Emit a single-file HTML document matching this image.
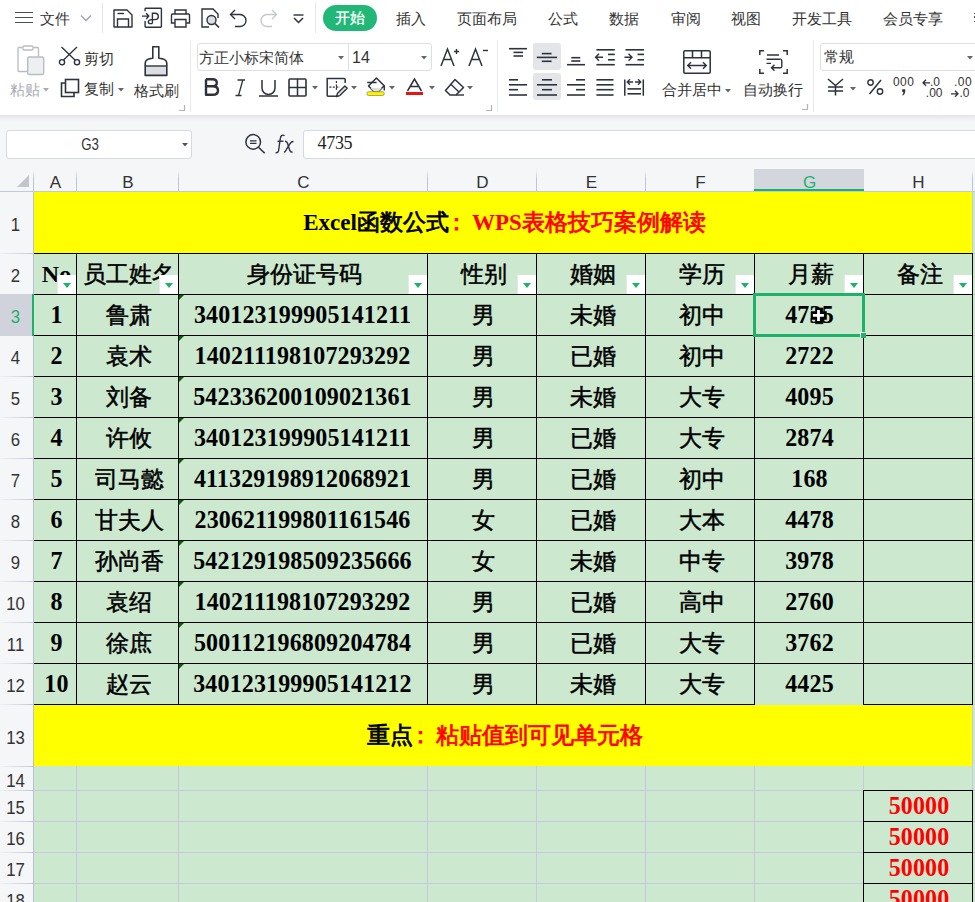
<!DOCTYPE html><html><head><meta charset="utf-8"><style>
html,body{margin:0;padding:0;}
body{width:975px;height:902px;overflow:hidden;position:relative;background:#fff;font-family:"Liberation Sans",sans-serif;color:#333;}
div,svg{box-sizing:border-box;}
svg{position:absolute;overflow:visible}
.s{font-family:"Liberation Serif",serif;font-weight:bold;}
.dg{letter-spacing:0.14px;display:inline-block;transform:scaleY(1.05);transform-origin:50% 70%}
.cj{font-size:22.5px;font-weight:normal;-webkit-text-stroke:0.5px currentColor}
.tt .cj{-webkit-text-stroke:0.8px currentColor}
</style></head><body>
<div style="position:absolute;left:15px;top:11.5px;width:18px;height:1.3px;background:#4a4d57"></div>
<div style="position:absolute;left:15px;top:16.5px;width:18px;height:1.3px;background:#4a4d57"></div>
<div style="position:absolute;left:15px;top:21.5px;width:18px;height:1.3px;background:#4a4d57"></div>
<div class="" style="position:absolute;left:40px;top:9.7px;width:40px;height:18px;line-height:18px;text-align:left;white-space:nowrap;font-size:15px;color:#333;">文件</div>
<svg style="left:80px;top:14px" width="12" height="8"><path d="M1 1.5 L6 6.5 L11 1.5" fill="none" stroke="#9aa0ab" stroke-width="1.3"/></svg>
<div style="position:absolute;left:102px;top:3px;width:1px;height:30px;background:#e3e5ea"></div>
<svg style="left:113px;top:9px" width="20" height="19" viewBox="0 0 20 19"><path d="M1 1 H14 L19 6 V18 H1 Z" fill="none" stroke="#2e323e" stroke-width="1.4" stroke-linejoin="round"/><path d="M4.5 18 V10 H15.5 V18" fill="none" stroke="#2e323e" stroke-width="1.4"/><path d="M4.5 4.5 H11" stroke="#2e323e" stroke-width="1.4"/></svg>
<svg style="left:0px;top:0px" width="975" height="40"><path d="M145.1 11.3 V9 Q145.1 8.3 145.8 8.3 H160.7 Q161.4 8.3 161.4 9 V26.6 Q161.4 27.3 160.7 27.3 H145.8 Q145.1 27.3 145.1 26.6 V21.1" fill="none" stroke="#2e323e" stroke-width="1.4"/><path d="M142 16.1 H148.5 M146.2 13.3 L148.8 16.1 L146.2 18.9" fill="none" stroke="#2e323e" stroke-width="1.4"/><path d="M152.4 23.6 V13.2 H155 Q158.3 13.2 158.3 16.5 Q158.3 19.6 155 19.6 H151.5 Q148.3 19.8 148.3 22 Q148.3 23.6 150.5 23.6 H152.4" fill="none" stroke="#2e323e" stroke-width="1.4"/></svg>
<svg style="left:170px;top:9px" width="21" height="19" viewBox="0 0 21 19"><path d="M5 5 V1 H16 V5" fill="none" stroke="#2e323e" stroke-width="1.4"/><path d="M5 14 H1.5 V6 Q1.5 5 2.5 5 H18.5 Q19.5 5 19.5 6 V14 H16" fill="none" stroke="#2e323e" stroke-width="1.4"/><path d="M5 10.5 H16 V18 H5 Z" fill="none" stroke="#2e323e" stroke-width="1.4"/></svg>
<svg style="left:201px;top:8px" width="20" height="20" viewBox="0 0 20 20"><path d="M8 19 H1 V1 H12 L17 6 V10" fill="none" stroke="#2e323e" stroke-width="1.4"/><circle cx="10.5" cy="12" r="4.5" fill="#dcdfe4" stroke="#2e323e" stroke-width="1.4"/><path d="M14 15.5 L18 19.5" stroke="#2e323e" stroke-width="1.7"/></svg>
<svg style="left:229px;top:9px" width="19" height="19" viewBox="0 0 19 19"><path d="M6 1 L1.5 5.5 L6 10" fill="none" stroke="#2e323e" stroke-width="1.4"/><path d="M2 5.5 H11 A6 6 0 0 1 11 17.5 H6" fill="none" stroke="#2e323e" stroke-width="1.4"/></svg>
<svg style="left:259px;top:9px" width="19" height="19" viewBox="0 0 19 19"><path d="M13 1 L17.5 5.5 L13 10" fill="none" stroke="#c4c7cd" stroke-width="1.4"/><path d="M17 5.5 H8 A6 6 0 0 0 8 17.5 H13" fill="none" stroke="#c4c7cd" stroke-width="1.4"/></svg>
<svg style="left:293px;top:14px" width="11" height="10" viewBox="0 0 11 10"><path d="M0.5 1 H10.5" stroke="#2e323e" stroke-width="1.4"/><path d="M1 4 L5.5 8.5 L10 4" fill="none" stroke="#2e323e" stroke-width="1.5"/></svg>
<div style="position:absolute;left:315px;top:3px;width:1px;height:30px;background:#e3e5ea"></div>
<div style="position:absolute;left:323px;top:5px;width:54px;height:26px;background:#21b877;border-radius:13px"></div>
<div class="" style="position:absolute;left:323px;top:4.5px;width:54px;height:26px;line-height:26px;text-align:center;white-space:nowrap;font-size:15px;color:#fff;-webkit-text-stroke:0.3px #fff">开始</div>
<div class="" style="position:absolute;left:396px;top:9.7px;width:80px;height:18px;line-height:18px;text-align:left;white-space:nowrap;font-size:15px;color:#333;">插入</div>
<div class="" style="position:absolute;left:457px;top:9.7px;width:80px;height:18px;line-height:18px;text-align:left;white-space:nowrap;font-size:15px;color:#333;">页面布局</div>
<div class="" style="position:absolute;left:548px;top:9.7px;width:80px;height:18px;line-height:18px;text-align:left;white-space:nowrap;font-size:15px;color:#333;">公式</div>
<div class="" style="position:absolute;left:609px;top:9.7px;width:80px;height:18px;line-height:18px;text-align:left;white-space:nowrap;font-size:15px;color:#333;">数据</div>
<div class="" style="position:absolute;left:671px;top:9.7px;width:80px;height:18px;line-height:18px;text-align:left;white-space:nowrap;font-size:15px;color:#333;">审阅</div>
<div class="" style="position:absolute;left:731px;top:9.7px;width:80px;height:18px;line-height:18px;text-align:left;white-space:nowrap;font-size:15px;color:#333;">视图</div>
<div class="" style="position:absolute;left:792px;top:9.7px;width:80px;height:18px;line-height:18px;text-align:left;white-space:nowrap;font-size:15px;color:#333;">开发工具</div>
<div class="" style="position:absolute;left:883px;top:9.7px;width:80px;height:18px;line-height:18px;text-align:left;white-space:nowrap;font-size:15px;color:#333;">会员专享</div>
<div style="position:absolute;left:974px;top:12.5px;width:1px;height:1.5px;background:#555"></div>
<div style="position:absolute;left:974px;top:16px;width:1px;height:1.5px;background:#555"></div>
<div style="position:absolute;left:974px;top:20.5px;width:1px;height:1.5px;background:#555"></div>
<svg style="left:17px;top:45px" width="28" height="31" viewBox="0 0 28 31"><path d="M5.5 2.5 H2 Q1 2.5 1 3.5 V25.5 Q1 26.5 2 26.5 H10" fill="none" stroke="#b9bcc2" stroke-width="1.3"/><rect x="6" y="1" width="10" height="4" rx="1" fill="none" stroke="#b9bcc2" stroke-width="1.3"/><path d="M16.5 2.5 H20.5 Q21.5 2.5 21.5 3.5 V11.5" fill="none" stroke="#b9bcc2" stroke-width="1.3"/><rect x="10.7" y="12" width="16" height="17.5" rx="1.5" fill="#eeeff1" stroke="#b9bcc2" stroke-width="1.4"/></svg>
<div style="position:absolute;left:10px;top:82px;width:34px;height:16px;line-height:16px;text-align:left;white-space:nowrap;font-size:15px;color:#a8abb1">粘贴</div>
<svg style="left:43px;top:88px" width="6" height="4" viewBox="0 0 6 4"><path d="M0 0 H6 L3 3.5 Z" fill="#aaa"/></svg>
<svg style="left:58px;top:46px" width="22" height="20" viewBox="0 0 22 20"><path d="M3.5 1 L17.5 14.5 M19 1 L5 14.5" stroke="#2e323e" stroke-width="1.3"/><circle cx="4" cy="16.2" r="2.6" fill="#fff" stroke="#2e323e" stroke-width="1.4"/><circle cx="19" cy="16.2" r="2.6" fill="#fff" stroke="#2e323e" stroke-width="1.4"/></svg>
<div style="position:absolute;left:84px;top:50.5px;width:34px;height:16px;line-height:16px;text-align:left;white-space:nowrap;font-size:15px;color:#333">剪切</div>
<svg style="left:60px;top:78px" width="20" height="20" viewBox="0 0 20 20"><path d="M5 5 H1.5 V18.5 H14 V15" fill="none" stroke="#2e323e" stroke-width="1.6"/><rect x="5.5" y="1.5" width="13" height="13" fill="none" stroke="#2e323e" stroke-width="1.6"/></svg>
<div style="position:absolute;left:84px;top:81px;width:34px;height:16px;line-height:16px;text-align:left;white-space:nowrap;font-size:15px;color:#333">复制</div>
<svg style="left:118px;top:88px" width="6" height="4" viewBox="0 0 6 4"><path d="M0 0 H6 L3 3.5 Z" fill="#666"/></svg>
<svg style="left:143px;top:45px" width="26" height="32" viewBox="0 0 26 32"><rect x="2.8" y="21" width="20.5" height="9" fill="#dcdee2"/><path d="M9.8 13.2 V1.8 H15.8 V13.2 Q23.8 13.6 23.8 18.2 V30.4 H2.2 V18.2 Q2.2 13.6 9.8 13.2 Z" fill="none" stroke="#2e323e" stroke-width="1.6" stroke-linejoin="round"/><path d="M2.2 21 H23.8" stroke="#2e323e" stroke-width="1.4"/></svg>
<div style="position:absolute;left:134px;top:82.5px;width:46px;height:16px;line-height:16px;text-align:left;white-space:nowrap;font-size:15px;color:#333">格式刷</div>
<svg style="left:179px;top:104.5px" width="6" height="6" viewBox="0 0 6 6"><path d="M5.5 0 V5.5 H0" fill="none" stroke="#b0b4bc" stroke-width="1.2"/></svg>
<div style="position:absolute;left:190px;top:40px;width:1px;height:72px;background:#e6e8ec"></div>
<div style="position:absolute;left:197px;top:43px;width:235px;height:28px;border:1px solid #dcdfe5;border-radius:3px;background:#fff"></div>
<div style="position:absolute;left:348px;top:43px;width:1px;height:28px;background:#dcdfe5"></div>
<div style="position:absolute;left:199px;top:49px;width:120px;height:18px;line-height:18px;text-align:left;white-space:nowrap;font-size:15px;color:#333">方正小标宋简体</div>
<svg style="left:338px;top:55.5px" width="6" height="4" viewBox="0 0 6 4"><path d="M0 0 H6 L3 3.5 Z" fill="#666"/></svg>
<div style="position:absolute;left:352px;top:49px;width:40px;height:18px;line-height:18px;text-align:left;white-space:nowrap;font-size:16px;color:#333">14</div>
<svg style="left:421px;top:55.5px" width="6" height="4" viewBox="0 0 6 4"><path d="M0 0 H6 L3 3.5 Z" fill="#666"/></svg>
<svg style="left:440px;top:47px" width="22" height="20" viewBox="0 0 22 20"><path d="M1 19 L7.5 2 L14 19 M3.5 12.5 H11.5" fill="none" stroke="#2e323e" stroke-width="1.5"/><path d="M14 4.5 H19 M16.5 2 V7" stroke="#2e323e" stroke-width="1.4"/></svg>
<svg style="left:468px;top:47px" width="22" height="20" viewBox="0 0 22 20"><path d="M1 19 L7.5 2 L14 19 M3.5 12.5 H11.5" fill="none" stroke="#2e323e" stroke-width="1.5"/><path d="M15 3.5 H20" stroke="#2e323e" stroke-width="1.4"/></svg>
<svg style="left:204px;top:78px" width="16" height="18" viewBox="0 0 16 18"><path d="M2 1.2 H8.5 Q12.8 1.2 12.8 4.8 Q12.8 8.3 8.5 8.3 H2 M8.5 8.3 Q14 8.3 14 12.5 Q14 16.8 8.5 16.8 H2 V1.2" fill="none" stroke="#2f323c" stroke-width="2.4" stroke-linejoin="round"/></svg>
<svg style="left:235px;top:79px" width="11" height="18" viewBox="0 0 11 18"><path d="M2.5 1 H10 M0.5 16.5 H6.5 M7.8 1 L3.5 16.5" fill="none" stroke="#2e323e" stroke-width="1.3"/></svg>
<svg style="left:259px;top:79px" width="19" height="18" viewBox="0 0 19 18"><path d="M3 1 V9 A6.5 6.5 0 0 0 16 9 V1" fill="none" stroke="#2e323e" stroke-width="1.5"/><path d="M0 17 H19" stroke="#2e323e" stroke-width="1.5"/></svg>
<svg style="left:288px;top:78px" width="19" height="19" viewBox="0 0 19 19"><rect x="1" y="1" width="17" height="17" rx="1" fill="none" stroke="#2e323e" stroke-width="1.6"/><path d="M9.5 1 V18 M1 9.5 H18" stroke="#2e323e" stroke-width="1.5"/></svg>
<svg style="left:312px;top:85.5px" width="6" height="4" viewBox="0 0 6 4"><path d="M0 0 H6 L3 3.5 Z" fill="#666"/></svg>
<svg style="left:0px;top:0px" width="975" height="120"><path d="M327.2 96.2 V78.6 H344 Q345.2 78.6 345.2 79.8 V83" fill="none" stroke="#2e323e" stroke-width="1.5"/><path d="M327.2 96.2 H336" stroke="#2e323e" stroke-width="1.5"/><path d="M336.4 81 V90 M329.4 87.2 H339.8" stroke="#2e323e" stroke-width="1.2" stroke-dasharray="2 1.4"/><path d="M336.5 96.6 L337.5 93.3 L344.9 85.9 L347.2 88.2 L339.8 95.6 Z" fill="#e4e5e8" stroke="#2e323e" stroke-width="1.4" stroke-linejoin="round"/></svg>
<svg style="left:351px;top:85.5px" width="6" height="4" viewBox="0 0 6 4"><path d="M0 0 H6 L3 3.5 Z" fill="#666"/></svg>
<svg style="left:0px;top:0px" width="975" height="120"><path d="M368.5 86 L376.4 78 L384.2 85.8 L378 92 H374.5 Z" fill="#fff" stroke="#2e323e" stroke-width="1.5" stroke-linejoin="round"/><path d="M370.5 88 H382 L378.5 91.5 H374 Z" fill="#dcdee2"/><path d="M367.2 82.5 H376.6" stroke="#2e323e" stroke-width="1.5"/><path d="M384.3 85.8 V90.5" stroke="#2e323e" stroke-width="1.4"/><rect x="367" y="91.7" width="17.2" height="3.8" rx="1.6" fill="#fff200" stroke="#8a8a3a" stroke-width="0.7"/></svg>
<svg style="left:389px;top:85.5px" width="6" height="4" viewBox="0 0 6 4"><path d="M0 0 H6 L3 3.5 Z" fill="#666"/></svg>
<svg style="left:406px;top:78px" width="18" height="19" viewBox="0 0 18 19"><path d="M1.5 13 L8.5 1 L15.5 13 M4.5 8.5 H12.5" fill="none" stroke="#2e323e" stroke-width="1.5"/><rect x="0" y="14" width="17" height="3" fill="#ee1111"/></svg>
<svg style="left:429px;top:85.5px" width="6" height="4" viewBox="0 0 6 4"><path d="M0 0 H6 L3 3.5 Z" fill="#666"/></svg>
<svg style="left:444px;top:78px" width="21" height="19" viewBox="0 0 21 19"><path d="M11 1.5 L19.5 9.5 L12 17 H6 L1.5 12.5 Z" fill="none" stroke="#2e323e" stroke-width="1.5" stroke-linejoin="round"/><path d="M6.5 6 L15 14" stroke="#2e323e" stroke-width="1.4"/><path d="M12 17 H20" stroke="#2e323e" stroke-width="1.4"/></svg>
<svg style="left:467px;top:85.5px" width="6" height="4" viewBox="0 0 6 4"><path d="M0 0 H6 L3 3.5 Z" fill="#666"/></svg>
<svg style="left:486px;top:104.5px" width="6" height="6" viewBox="0 0 6 6"><path d="M5.5 0 V5.5 H0" fill="none" stroke="#b0b4bc" stroke-width="1.2"/></svg>
<div style="position:absolute;left:497px;top:40px;width:1px;height:72px;background:#e6e8ec"></div>
<div style="position:absolute;left:533px;top:43px;width:28px;height:27px;background:#e3e5e9;border-radius:3px"></div>
<div style="position:absolute;left:533px;top:73px;width:28px;height:27px;background:#e3e5e9;border-radius:3px"></div>
<svg style="left:0px;top:0px" width="975" height="120"><path d="M509 48.7 H527" stroke="#2e323e" stroke-width="1.6"/><path d="M513.5 52.4 H523" stroke="#2e323e" stroke-width="1.6"/><path d="M513.5 56 H523" stroke="#2e323e" stroke-width="1.6"/><path d="M541.8 53.6 H551.6" stroke="#2e323e" stroke-width="1.6"/><path d="M536.8 57.4 H557" stroke="#2e323e" stroke-width="1.6"/><path d="M541.8 61.3 H551.6" stroke="#2e323e" stroke-width="1.6"/><path d="M571.3 57.7 H580.3" stroke="#2e323e" stroke-width="1.6"/><path d="M571.3 61 H580.3" stroke="#2e323e" stroke-width="1.6"/><path d="M567 64.7 H585" stroke="#2e323e" stroke-width="1.6"/><path d="M596.4 49.8 H614.8" stroke="#2e323e" stroke-width="1.6"/><path d="M608 54.4 H614.8" stroke="#2e323e" stroke-width="1.6"/><path d="M608 59.8 H614.8" stroke="#2e323e" stroke-width="1.6"/><path d="M596.4 64.7 H614.8" stroke="#2e323e" stroke-width="1.6"/><path d="M595.5 57.2 H603 M599 53.7 L595.6 57.2 L599 60.7" fill="none" stroke="#2e323e" stroke-width="1.4"/><path d="M625.5 49.8 H644" stroke="#2e323e" stroke-width="1.6"/><path d="M637.5 54.4 H644" stroke="#2e323e" stroke-width="1.6"/><path d="M637.5 59.8 H644" stroke="#2e323e" stroke-width="1.6"/><path d="M625.5 64.7 H644" stroke="#2e323e" stroke-width="1.6"/><path d="M624.5 57.2 H632 M628.5 53.7 L632 57.2 L628.5 60.7" fill="none" stroke="#2e323e" stroke-width="1.4"/><path d="M509 79.8 H518" stroke="#2e323e" stroke-width="1.6"/><path d="M509 84.8 H527" stroke="#2e323e" stroke-width="1.6"/><path d="M509 89.7 H518" stroke="#2e323e" stroke-width="1.6"/><path d="M509 95 H527" stroke="#2e323e" stroke-width="1.6"/><path d="M542 79.8 H552" stroke="#2e323e" stroke-width="1.6"/><path d="M537 84.8 H557" stroke="#2e323e" stroke-width="1.6"/><path d="M542 89.7 H552" stroke="#2e323e" stroke-width="1.6"/><path d="M537 95 H557" stroke="#2e323e" stroke-width="1.6"/><path d="M576 79.8 H585" stroke="#2e323e" stroke-width="1.6"/><path d="M567 84.8 H585" stroke="#2e323e" stroke-width="1.6"/><path d="M576 89.7 H585" stroke="#2e323e" stroke-width="1.6"/><path d="M567 95 H585" stroke="#2e323e" stroke-width="1.6"/><path d="M596.4 79.8 H613.5" stroke="#2e323e" stroke-width="1.6"/><path d="M596.4 84.8 H613.5" stroke="#2e323e" stroke-width="1.6"/><path d="M596.4 89.7 H613.5" stroke="#2e323e" stroke-width="1.6"/><path d="M596.4 95 H613.5" stroke="#2e323e" stroke-width="1.6"/><path d="M624.8 79.5 V95.8 M643.3 79.5 V95.8" stroke="#2e323e" stroke-width="1.5"/><path d="M627.5 88.9 H641" stroke="#2e323e" stroke-width="1.6"/><path d="M627.5 93.8 H641" stroke="#2e323e" stroke-width="1.6"/><path d="M627 82 H633 M630 79.2 L627.2 82 L630 84.8 M635 82 H641 M638 79.2 L640.8 82 L638 84.8" fill="none" stroke="#2e323e" stroke-width="1.3"/></svg>
<svg style="left:683px;top:49.5px" width="28" height="24" viewBox="0 0 28 24"><rect x="0.8" y="0.8" width="26.4" height="22.4" rx="1.2" fill="none" stroke="#2e323e" stroke-width="1.5"/><path d="M0.8 7.8 H27.2 M9.5 0.8 V7.8 M18.5 0.8 V7.8" stroke="#2e323e" stroke-width="1.5"/><path d="M4.5 15.5 H23.5 M8 12.2 L4.7 15.5 L8 18.8 M20 12.2 L23.3 15.5 L20 18.8" fill="none" stroke="#2e323e" stroke-width="1.4"/></svg>
<div style="position:absolute;left:662px;top:82px;width:64px;height:16px;line-height:16px;text-align:left;white-space:nowrap;font-size:15px;color:#333">合并居中</div>
<svg style="left:725px;top:88.5px" width="6" height="4" viewBox="0 0 6 4"><path d="M0 0 H6 L3 3.5 Z" fill="#666"/></svg>
<svg style="left:758.5px;top:49.5px" width="29" height="24" viewBox="0 0 29 24"><path d="M5 0.8 H0.8 V5 M0.8 19 V23.2 H5 M24 0.8 H28.2 V5 M28.2 19 V23.2 H24" fill="none" stroke="#2e323e" stroke-width="1.5"/><path d="M8 5 H20 M7.5 9.2 H21.5 M7.5 13.4 H12" stroke="#2e323e" stroke-width="1.4"/><path d="M21.5 9.2 Q22.8 9.2 22.8 11 V16.5 Q22.8 17.8 21.5 17.8 H12.5 M15.5 14.8 L12.5 17.8 L15.5 20.8" fill="none" stroke="#2e323e" stroke-width="1.4"/></svg>
<div style="position:absolute;left:743px;top:82px;width:64px;height:16px;line-height:16px;text-align:left;white-space:nowrap;font-size:15px;color:#333">自动换行</div>
<svg style="left:802px;top:104px" width="6" height="6" viewBox="0 0 6 6"><path d="M5.5 0 V5.5 H0" fill="none" stroke="#b0b4bc" stroke-width="1.2"/></svg>
<div style="position:absolute;left:813px;top:40px;width:1px;height:72px;background:#e6e8ec"></div>
<div style="position:absolute;left:820px;top:43px;width:170px;height:28px;border:1px solid #dcdfe5;border-radius:3px;background:#fff"></div>
<div style="position:absolute;left:824px;top:48px;width:40px;height:18px;line-height:18px;text-align:left;white-space:nowrap;font-size:15px;color:#333">常规</div>
<svg style="left:967px;top:56px" width="6" height="4" viewBox="0 0 6 4"><path d="M0 0 H6 L3 3.5 Z" fill="#666"/></svg>
<svg style="left:827px;top:78px" width="18" height="18" viewBox="0 0 18 18"><path d="M1 1 L8.5 7.5 L16 1 M8.5 7.5 V17.5 M1 9 H16 M1 13 H16" fill="none" stroke="#2e323e" stroke-width="1.5"/></svg>
<svg style="left:850px;top:87px" width="6" height="4" viewBox="0 0 6 4"><path d="M0 0 H6 L3 3.5 Z" fill="#666"/></svg>
<svg style="left:867px;top:79px" width="17" height="16" viewBox="0 0 17 16"><circle cx="3.5" cy="3.5" r="2.7" fill="none" stroke="#2e323e" stroke-width="1.4"/><circle cx="13" cy="12.5" r="2.7" fill="none" stroke="#2e323e" stroke-width="1.4"/><path d="M14 1 L2.5 15" stroke="#2e323e" stroke-width="1.5"/></svg>
<div style="position:absolute;left:893px;top:75px;width:24px;height:14px;line-height:14px;text-align:left;white-space:nowrap;font-size:12px;color:#333;letter-spacing:0.4px">000</div>
<svg style="left:901px;top:88px" width="5" height="8"><path d="M1.2 1.2 H4.2 V3.5 Q4.2 6 2 7.5 L1.2 7 Q2.4 5.8 2.4 4 H1.2 Z" fill="#2e323e"/></svg>
<svg style="left:922px;top:78.5px" width="9" height="8"><path d="M1 3.8 H8 M4 0.8 L1 3.8 L4 6.8" fill="none" stroke="#2e323e" stroke-width="1.3"/></svg>
<div style="position:absolute;left:930px;top:75px;width:14px;height:14px;line-height:14px;text-align:left;white-space:nowrap;font-size:12px;color:#333">.0</div>
<div style="position:absolute;left:922px;top:86px;width:20.5px;height:14px;line-height:14px;text-align:left;white-space:nowrap;font-size:12px;color:#333;text-align:right">.00</div>
<div style="position:absolute;left:950px;top:75px;width:22px;height:14px;line-height:14px;text-align:left;white-space:nowrap;font-size:12px;color:#333;text-align:right;letter-spacing:0.4px">.00</div>
<svg style="left:951px;top:89.5px" width="9" height="8"><path d="M0 3.8 H7 M4 0.8 L7 3.8 L4 6.8" fill="none" stroke="#2e323e" stroke-width="1.3"/></svg>
<div style="position:absolute;left:959.5px;top:86px;width:14px;height:14px;line-height:14px;text-align:left;white-space:nowrap;font-size:12px;color:#333">.0</div>
<div style="position:absolute;left:0px;top:115px;width:975px;height:76px;background:#f5f6f8"></div>
<div style="position:absolute;left:0px;top:115px;width:975px;height:6px;background:linear-gradient(#e2e4e7,#f5f6f8)"></div>
<div style="position:absolute;left:6px;top:130px;width:186px;height:29px;background:#fff;border:1px solid #d5d9e0;border-radius:3px"></div>
<div class="" style="position:absolute;left:40px;top:131px;width:100px;height:27px;line-height:27px;text-align:center;white-space:nowrap;font-size:17px;color:#333;transform:scaleX(0.78);">G3</div>
<svg style="left:182px;top:143px" width="6" height="4"><path d="M0 0 H6 L3 3.5 Z" fill="#555"/></svg>
<svg style="left:245px;top:134px" width="21" height="21" viewBox="0 0 21 21"><circle cx="8.2" cy="7.9" r="7.3" fill="none" stroke="#2e323e" stroke-width="1.5"/><path d="M5 6.9 H11.5 M5 9.4 H11.5" stroke="#2e323e" stroke-width="1.4"/><path d="M13.5 13.2 L19.7 19.3" stroke="#2e323e" stroke-width="1.6"/></svg>
<svg style="left:274px;top:134px" width="21" height="20" viewBox="0 0 21 20"><path d="M10.5 1.8 Q9 0.6 7.6 1.6 Q6.6 2.4 6.3 4.5 L4.6 16.5 Q4.2 19 1.6 18.8" fill="none" stroke="#2e323e" stroke-width="1.4"/><path d="M3.5 7.2 H9.5" stroke="#2e323e" stroke-width="1.4"/><path d="M11 7.2 Q12.8 7 13.6 9.5 L15.6 16 Q16.4 18.6 18.6 18" fill="none" stroke="#2e323e" stroke-width="1.4"/><path d="M19.5 7.5 Q17.8 7.2 16 9.6 L12.6 15.2 Q11.4 17.6 10.2 18.4" fill="none" stroke="#2e323e" stroke-width="1.4"/></svg>
<div style="position:absolute;left:303px;top:130px;width:680px;height:29px;background:#fff;border:1px solid #d5d9e0;border-radius:3px"></div>
<div class="" style="position:absolute;left:317.5px;top:130px;width:80px;height:27px;line-height:27px;text-align:left;white-space:nowrap;font-family:Liberation Serif,serif;font-size:18px;color:#222;letter-spacing:-0.3px">4735</div>
<div style="position:absolute;left:0px;top:191px;width:975px;height:1px;background:#c3c8d6"></div>
<div style="position:absolute;left:17px;top:175px;width:12px;height:12px;background:#c3c5c9;clip-path:polygon(100% 0,100% 100%,0 100%)"></div>
<div style="position:absolute;left:33px;top:170px;width:1px;height:21px;background:linear-gradient(rgba(190,196,212,0),#bfc5d6 40%)"></div>
<div style="position:absolute;left:76px;top:170px;width:1px;height:21px;background:linear-gradient(rgba(190,196,212,0),#bfc5d6 40%)"></div>
<div style="position:absolute;left:178px;top:170px;width:1px;height:21px;background:linear-gradient(rgba(190,196,212,0),#bfc5d6 40%)"></div>
<div style="position:absolute;left:427px;top:170px;width:1px;height:21px;background:linear-gradient(rgba(190,196,212,0),#bfc5d6 40%)"></div>
<div style="position:absolute;left:536px;top:170px;width:1px;height:21px;background:linear-gradient(rgba(190,196,212,0),#bfc5d6 40%)"></div>
<div style="position:absolute;left:645px;top:170px;width:1px;height:21px;background:linear-gradient(rgba(190,196,212,0),#bfc5d6 40%)"></div>
<div style="position:absolute;left:754px;top:170px;width:1px;height:21px;background:linear-gradient(rgba(190,196,212,0),#bfc5d6 40%)"></div>
<div style="position:absolute;left:863px;top:170px;width:1px;height:21px;background:linear-gradient(rgba(190,196,212,0),#bfc5d6 40%)"></div>
<div style="position:absolute;left:972px;top:170px;width:1px;height:21px;background:linear-gradient(rgba(190,196,212,0),#bfc5d6 40%)"></div>
<div style="position:absolute;left:754px;top:169px;width:110px;height:22px;background:#d3d6dd"></div>
<div style="position:absolute;left:754px;top:189px;width:110px;height:2px;background:#1fb16c"></div>
<div class="" style="position:absolute;left:34px;top:171.5px;width:43px;height:21px;line-height:21px;text-align:center;white-space:nowrap;font-size:17px;color:#333;">A</div>
<div class="" style="position:absolute;left:77px;top:171.5px;width:102px;height:21px;line-height:21px;text-align:center;white-space:nowrap;font-size:17px;color:#333;">B</div>
<div class="" style="position:absolute;left:179px;top:171.5px;width:249px;height:21px;line-height:21px;text-align:center;white-space:nowrap;font-size:17px;color:#333;">C</div>
<div class="" style="position:absolute;left:428px;top:171.5px;width:109px;height:21px;line-height:21px;text-align:center;white-space:nowrap;font-size:17px;color:#333;">D</div>
<div class="" style="position:absolute;left:537px;top:171.5px;width:109px;height:21px;line-height:21px;text-align:center;white-space:nowrap;font-size:17px;color:#333;">E</div>
<div class="" style="position:absolute;left:646px;top:171.5px;width:109px;height:21px;line-height:21px;text-align:center;white-space:nowrap;font-size:17px;color:#333;">F</div>
<div class="" style="position:absolute;left:755px;top:171.5px;width:109px;height:21px;line-height:21px;text-align:center;white-space:nowrap;font-size:17px;color:#1fb16c;">G</div>
<div class="" style="position:absolute;left:864px;top:171.5px;width:109px;height:21px;line-height:21px;text-align:center;white-space:nowrap;font-size:17px;color:#333;">H</div>
<div style="position:absolute;left:0px;top:192px;width:33px;height:710px;background:#f5f6f8"></div>
<div style="position:absolute;left:33px;top:192px;width:1px;height:710px;background:#b9c0d4"></div>
<div style="position:absolute;left:34px;top:192px;width:941px;height:710px;background:#cce8cf"></div>
<div style="position:absolute;left:76px;top:192px;width:1px;height:710px;background:#c5c9df"></div>
<div style="position:absolute;left:178px;top:192px;width:1px;height:710px;background:#c5c9df"></div>
<div style="position:absolute;left:427px;top:192px;width:1px;height:710px;background:#c5c9df"></div>
<div style="position:absolute;left:536px;top:192px;width:1px;height:710px;background:#c5c9df"></div>
<div style="position:absolute;left:645px;top:192px;width:1px;height:710px;background:#c5c9df"></div>
<div style="position:absolute;left:754px;top:192px;width:1px;height:710px;background:#c5c9df"></div>
<div style="position:absolute;left:863px;top:192px;width:1px;height:710px;background:#c5c9df"></div>
<div style="position:absolute;left:972px;top:192px;width:1px;height:710px;background:#c5c9df"></div>
<div style="position:absolute;left:34px;top:253px;width:941px;height:1px;background:#c5c9df"></div>
<div style="position:absolute;left:0px;top:253px;width:33px;height:1px;background:linear-gradient(90deg,#f0f1f4,#c3c8d6)"></div>
<div style="position:absolute;left:34px;top:294px;width:941px;height:1px;background:#c5c9df"></div>
<div style="position:absolute;left:0px;top:294px;width:33px;height:1px;background:linear-gradient(90deg,#f0f1f4,#c3c8d6)"></div>
<div style="position:absolute;left:34px;top:335px;width:941px;height:1px;background:#c5c9df"></div>
<div style="position:absolute;left:0px;top:335px;width:33px;height:1px;background:linear-gradient(90deg,#f0f1f4,#c3c8d6)"></div>
<div style="position:absolute;left:34px;top:376px;width:941px;height:1px;background:#c5c9df"></div>
<div style="position:absolute;left:0px;top:376px;width:33px;height:1px;background:linear-gradient(90deg,#f0f1f4,#c3c8d6)"></div>
<div style="position:absolute;left:34px;top:417px;width:941px;height:1px;background:#c5c9df"></div>
<div style="position:absolute;left:0px;top:417px;width:33px;height:1px;background:linear-gradient(90deg,#f0f1f4,#c3c8d6)"></div>
<div style="position:absolute;left:34px;top:458px;width:941px;height:1px;background:#c5c9df"></div>
<div style="position:absolute;left:0px;top:458px;width:33px;height:1px;background:linear-gradient(90deg,#f0f1f4,#c3c8d6)"></div>
<div style="position:absolute;left:34px;top:499px;width:941px;height:1px;background:#c5c9df"></div>
<div style="position:absolute;left:0px;top:499px;width:33px;height:1px;background:linear-gradient(90deg,#f0f1f4,#c3c8d6)"></div>
<div style="position:absolute;left:34px;top:540px;width:941px;height:1px;background:#c5c9df"></div>
<div style="position:absolute;left:0px;top:540px;width:33px;height:1px;background:linear-gradient(90deg,#f0f1f4,#c3c8d6)"></div>
<div style="position:absolute;left:34px;top:581px;width:941px;height:1px;background:#c5c9df"></div>
<div style="position:absolute;left:0px;top:581px;width:33px;height:1px;background:linear-gradient(90deg,#f0f1f4,#c3c8d6)"></div>
<div style="position:absolute;left:34px;top:622px;width:941px;height:1px;background:#c5c9df"></div>
<div style="position:absolute;left:0px;top:622px;width:33px;height:1px;background:linear-gradient(90deg,#f0f1f4,#c3c8d6)"></div>
<div style="position:absolute;left:34px;top:663px;width:941px;height:1px;background:#c5c9df"></div>
<div style="position:absolute;left:0px;top:663px;width:33px;height:1px;background:linear-gradient(90deg,#f0f1f4,#c3c8d6)"></div>
<div style="position:absolute;left:34px;top:704px;width:941px;height:1px;background:#c5c9df"></div>
<div style="position:absolute;left:0px;top:704px;width:33px;height:1px;background:linear-gradient(90deg,#f0f1f4,#c3c8d6)"></div>
<div style="position:absolute;left:0px;top:766px;width:33px;height:1px;background:linear-gradient(90deg,#f0f1f4,#c3c8d6)"></div>
<div style="position:absolute;left:34px;top:790px;width:941px;height:1px;background:#c5c9df"></div>
<div style="position:absolute;left:0px;top:790px;width:33px;height:1px;background:linear-gradient(90deg,#f0f1f4,#c3c8d6)"></div>
<div style="position:absolute;left:34px;top:821px;width:941px;height:1px;background:#c5c9df"></div>
<div style="position:absolute;left:0px;top:821px;width:33px;height:1px;background:linear-gradient(90deg,#f0f1f4,#c3c8d6)"></div>
<div style="position:absolute;left:34px;top:852px;width:941px;height:1px;background:#c5c9df"></div>
<div style="position:absolute;left:0px;top:852px;width:33px;height:1px;background:linear-gradient(90deg,#f0f1f4,#c3c8d6)"></div>
<div style="position:absolute;left:34px;top:883px;width:941px;height:1px;background:#c5c9df"></div>
<div style="position:absolute;left:0px;top:883px;width:33px;height:1px;background:linear-gradient(90deg,#f0f1f4,#c3c8d6)"></div>
<div style="position:absolute;left:34px;top:914px;width:941px;height:1px;background:#c5c9df"></div>
<div style="position:absolute;left:0px;top:914px;width:33px;height:1px;background:linear-gradient(90deg,#f0f1f4,#c3c8d6)"></div>
<div style="position:absolute;left:34px;top:192px;width:938px;height:61px;background:#ffff00"></div>
<div style="position:absolute;left:34px;top:705px;width:938px;height:61px;background:#ffff00"></div>
<div style="position:absolute;left:0px;top:294px;width:32px;height:42px;background:#d0d3db"></div>
<div style="position:absolute;left:32px;top:294px;width:2px;height:42px;background:#1fb16c"></div>
<div class="" style="position:absolute;left:-0.7px;top:195px;width:33px;height:61px;line-height:61px;text-align:center;white-space:nowrap;font-size:18px;color:#333;transform:scaleX(0.93)">1</div>
<div class="" style="position:absolute;left:-0.7px;top:256px;width:33px;height:40px;line-height:40px;text-align:center;white-space:nowrap;font-size:18px;color:#333;transform:scaleX(0.93)">2</div>
<div class="" style="position:absolute;left:-0.7px;top:297px;width:33px;height:40px;line-height:40px;text-align:center;white-space:nowrap;font-size:18px;color:#1fb16c;transform:scaleX(0.93)">3</div>
<div class="" style="position:absolute;left:-0.7px;top:338px;width:33px;height:40px;line-height:40px;text-align:center;white-space:nowrap;font-size:18px;color:#333;transform:scaleX(0.93)">4</div>
<div class="" style="position:absolute;left:-0.7px;top:379px;width:33px;height:40px;line-height:40px;text-align:center;white-space:nowrap;font-size:18px;color:#333;transform:scaleX(0.93)">5</div>
<div class="" style="position:absolute;left:-0.7px;top:420px;width:33px;height:40px;line-height:40px;text-align:center;white-space:nowrap;font-size:18px;color:#333;transform:scaleX(0.93)">6</div>
<div class="" style="position:absolute;left:-0.7px;top:461px;width:33px;height:40px;line-height:40px;text-align:center;white-space:nowrap;font-size:18px;color:#333;transform:scaleX(0.93)">7</div>
<div class="" style="position:absolute;left:-0.7px;top:502px;width:33px;height:40px;line-height:40px;text-align:center;white-space:nowrap;font-size:18px;color:#333;transform:scaleX(0.93)">8</div>
<div class="" style="position:absolute;left:-0.7px;top:543px;width:33px;height:40px;line-height:40px;text-align:center;white-space:nowrap;font-size:18px;color:#333;transform:scaleX(0.93)">9</div>
<div class="" style="position:absolute;left:-0.7px;top:584px;width:33px;height:40px;line-height:40px;text-align:center;white-space:nowrap;font-size:18px;color:#333;transform:scaleX(0.93)">10</div>
<div class="" style="position:absolute;left:-0.7px;top:625px;width:33px;height:40px;line-height:40px;text-align:center;white-space:nowrap;font-size:18px;color:#333;transform:scaleX(0.93)">11</div>
<div class="" style="position:absolute;left:-0.7px;top:666px;width:33px;height:40px;line-height:40px;text-align:center;white-space:nowrap;font-size:18px;color:#333;transform:scaleX(0.93)">12</div>
<div class="" style="position:absolute;left:-0.7px;top:708px;width:33px;height:61px;line-height:61px;text-align:center;white-space:nowrap;font-size:18px;color:#333;transform:scaleX(0.93)">13</div>
<div class="" style="position:absolute;left:-0.7px;top:770px;width:33px;height:23px;line-height:23px;text-align:center;white-space:nowrap;font-size:18px;color:#333;transform:scaleX(0.93)">14</div>
<div class="" style="position:absolute;left:-0.7px;top:793px;width:33px;height:30px;line-height:30px;text-align:center;white-space:nowrap;font-size:18px;color:#333;transform:scaleX(0.93)">15</div>
<div class="" style="position:absolute;left:-0.7px;top:824px;width:33px;height:30px;line-height:30px;text-align:center;white-space:nowrap;font-size:18px;color:#333;transform:scaleX(0.93)">16</div>
<div class="" style="position:absolute;left:-0.7px;top:855px;width:33px;height:30px;line-height:30px;text-align:center;white-space:nowrap;font-size:18px;color:#333;transform:scaleX(0.93)">17</div>
<div class="" style="position:absolute;left:-0.7px;top:886px;width:33px;height:30px;line-height:30px;text-align:center;white-space:nowrap;font-size:18px;color:#333;transform:scaleX(0.93)">18</div>
<div style="position:absolute;left:34px;top:253px;width:939px;height:1px;background:#000"></div>
<div style="position:absolute;left:34px;top:294px;width:939px;height:1px;background:#000"></div>
<div style="position:absolute;left:34px;top:335px;width:939px;height:1px;background:#000"></div>
<div style="position:absolute;left:34px;top:376px;width:939px;height:1px;background:#000"></div>
<div style="position:absolute;left:34px;top:417px;width:939px;height:1px;background:#000"></div>
<div style="position:absolute;left:34px;top:458px;width:939px;height:1px;background:#000"></div>
<div style="position:absolute;left:34px;top:499px;width:939px;height:1px;background:#000"></div>
<div style="position:absolute;left:34px;top:540px;width:939px;height:1px;background:#000"></div>
<div style="position:absolute;left:34px;top:581px;width:939px;height:1px;background:#000"></div>
<div style="position:absolute;left:34px;top:622px;width:939px;height:1px;background:#000"></div>
<div style="position:absolute;left:34px;top:663px;width:939px;height:1px;background:#000"></div>
<div style="position:absolute;left:34px;top:704px;width:721px;height:1px;background:#000"></div>
<div style="position:absolute;left:755px;top:704px;width:108px;height:1px;background:#cfe3de"></div>
<div style="position:absolute;left:863px;top:704px;width:110px;height:1px;background:#000"></div>
<div style="position:absolute;left:76px;top:253px;width:1px;height:452px;background:#000"></div>
<div style="position:absolute;left:178px;top:253px;width:1px;height:452px;background:#000"></div>
<div style="position:absolute;left:427px;top:253px;width:1px;height:452px;background:#000"></div>
<div style="position:absolute;left:536px;top:253px;width:1px;height:452px;background:#000"></div>
<div style="position:absolute;left:645px;top:253px;width:1px;height:452px;background:#000"></div>
<div style="position:absolute;left:754px;top:253px;width:1px;height:452px;background:#000"></div>
<div style="position:absolute;left:863px;top:253px;width:1px;height:452px;background:#000"></div>
<div style="position:absolute;left:972px;top:253px;width:1px;height:452px;background:#000"></div>
<div style="position:absolute;left:863px;top:790px;width:110px;height:1px;background:#000"></div>
<div style="position:absolute;left:863px;top:821px;width:110px;height:1px;background:#000"></div>
<div style="position:absolute;left:863px;top:852px;width:110px;height:1px;background:#000"></div>
<div style="position:absolute;left:863px;top:883px;width:110px;height:1px;background:#000"></div>
<div style="position:absolute;left:863px;top:790px;width:1px;height:112px;background:#000"></div>
<div style="position:absolute;left:972px;top:790px;width:1px;height:112px;background:#000"></div>
<div class="s tt" style="position:absolute;left:35.5px;top:192px;width:938px;height:61px;line-height:61px;text-align:center;font-size:23px;white-space:nowrap;color:#000">Excel<span class="cj" style="font-size:23px">函数公式</span><span style="color:#f00"><span class="cj" style="font-size:23px;position:relative;left:-4px">：</span>WPS<span class="cj" style="font-size:23px">表格技巧案例解读</span></span></div>
<div class="s tt" style="position:absolute;left:35.5px;top:705px;width:938px;height:61px;line-height:61px;text-align:center;font-size:23px;white-space:nowrap;color:#000"><span class="cj" style="font-size:23px">重点</span><span class="cj" style="color:#f00;font-size:23px"><span style="position:relative;left:-4px">：</span>粘贴值到可见单元格</span></div>
<div class="s" style="position:absolute;left:35px;top:254px;width:43px;height:40px;line-height:40px;text-align:center;white-space:nowrap;font-size:24px;color:#000"><span class="">No</span></div>
<div class="s" style="position:absolute;left:78px;top:254px;width:102px;height:40px;line-height:40px;text-align:center;white-space:nowrap;font-size:24px;color:#000"><span class="cj">员工姓名</span></div>
<div class="s" style="position:absolute;left:180px;top:254px;width:249px;height:40px;line-height:40px;text-align:center;white-space:nowrap;font-size:24px;color:#000"><span class="cj">身份证号码</span></div>
<div class="s" style="position:absolute;left:429px;top:254px;width:109px;height:40px;line-height:40px;text-align:center;white-space:nowrap;font-size:24px;color:#000"><span class="cj">性别</span></div>
<div class="s" style="position:absolute;left:538px;top:254px;width:109px;height:40px;line-height:40px;text-align:center;white-space:nowrap;font-size:24px;color:#000"><span class="cj">婚姻</span></div>
<div class="s" style="position:absolute;left:647px;top:254px;width:109px;height:40px;line-height:40px;text-align:center;white-space:nowrap;font-size:24px;color:#000"><span class="cj">学历</span></div>
<div class="s" style="position:absolute;left:756px;top:254px;width:109px;height:40px;line-height:40px;text-align:center;white-space:nowrap;font-size:24px;color:#000"><span class="cj">月薪</span></div>
<div class="s" style="position:absolute;left:865px;top:254px;width:109px;height:40px;line-height:40px;text-align:center;white-space:nowrap;font-size:24px;color:#000"><span class="cj">备注</span></div>
<div class="s" style="position:absolute;left:35px;top:295px;width:43px;height:40px;line-height:40px;text-align:center;white-space:nowrap;font-size:24px;color:#000"><span class="dg">1</span></div>
<div class="s" style="position:absolute;left:78px;top:295px;width:102px;height:40px;line-height:40px;text-align:center;white-space:nowrap;font-size:24px;color:#000"><span class="cj">鲁肃</span></div>
<div class="s" style="position:absolute;left:178px;top:295px;width:249px;height:40px;line-height:40px;text-align:center;white-space:nowrap;font-size:24px;color:#000"><span class="dg">340123199905141211</span></div>
<div class="s" style="position:absolute;left:429px;top:295px;width:109px;height:40px;line-height:40px;text-align:center;white-space:nowrap;font-size:24px;color:#000"><span class="cj">男</span></div>
<div class="s" style="position:absolute;left:538px;top:295px;width:109px;height:40px;line-height:40px;text-align:center;white-space:nowrap;font-size:24px;color:#000"><span class="cj">未婚</span></div>
<div class="s" style="position:absolute;left:647px;top:295px;width:109px;height:40px;line-height:40px;text-align:center;white-space:nowrap;font-size:24px;color:#000"><span class="cj">初中</span></div>
<div class="s" style="position:absolute;left:755px;top:295px;width:109px;height:40px;line-height:40px;text-align:center;white-space:nowrap;font-size:24px;color:#000"><span class="dg">4735</span></div>
<div style="position:absolute;left:179px;top:295px;width:5px;height:5px;background:#006400;clip-path:polygon(0 0,100% 0,0 100%)"></div>
<div class="s" style="position:absolute;left:35px;top:336px;width:43px;height:40px;line-height:40px;text-align:center;white-space:nowrap;font-size:24px;color:#000"><span class="dg">2</span></div>
<div class="s" style="position:absolute;left:78px;top:336px;width:102px;height:40px;line-height:40px;text-align:center;white-space:nowrap;font-size:24px;color:#000"><span class="cj">袁术</span></div>
<div class="s" style="position:absolute;left:178px;top:336px;width:249px;height:40px;line-height:40px;text-align:center;white-space:nowrap;font-size:24px;color:#000"><span class="dg">140211198107293292</span></div>
<div class="s" style="position:absolute;left:429px;top:336px;width:109px;height:40px;line-height:40px;text-align:center;white-space:nowrap;font-size:24px;color:#000"><span class="cj">男</span></div>
<div class="s" style="position:absolute;left:538px;top:336px;width:109px;height:40px;line-height:40px;text-align:center;white-space:nowrap;font-size:24px;color:#000"><span class="cj">已婚</span></div>
<div class="s" style="position:absolute;left:647px;top:336px;width:109px;height:40px;line-height:40px;text-align:center;white-space:nowrap;font-size:24px;color:#000"><span class="cj">初中</span></div>
<div class="s" style="position:absolute;left:755px;top:336px;width:109px;height:40px;line-height:40px;text-align:center;white-space:nowrap;font-size:24px;color:#000"><span class="dg">2722</span></div>
<div style="position:absolute;left:179px;top:336px;width:5px;height:5px;background:#006400;clip-path:polygon(0 0,100% 0,0 100%)"></div>
<div class="s" style="position:absolute;left:35px;top:377px;width:43px;height:40px;line-height:40px;text-align:center;white-space:nowrap;font-size:24px;color:#000"><span class="dg">3</span></div>
<div class="s" style="position:absolute;left:78px;top:377px;width:102px;height:40px;line-height:40px;text-align:center;white-space:nowrap;font-size:24px;color:#000"><span class="cj">刘备</span></div>
<div class="s" style="position:absolute;left:178px;top:377px;width:249px;height:40px;line-height:40px;text-align:center;white-space:nowrap;font-size:24px;color:#000"><span class="dg">542336200109021361</span></div>
<div class="s" style="position:absolute;left:429px;top:377px;width:109px;height:40px;line-height:40px;text-align:center;white-space:nowrap;font-size:24px;color:#000"><span class="cj">男</span></div>
<div class="s" style="position:absolute;left:538px;top:377px;width:109px;height:40px;line-height:40px;text-align:center;white-space:nowrap;font-size:24px;color:#000"><span class="cj">未婚</span></div>
<div class="s" style="position:absolute;left:647px;top:377px;width:109px;height:40px;line-height:40px;text-align:center;white-space:nowrap;font-size:24px;color:#000"><span class="cj">大专</span></div>
<div class="s" style="position:absolute;left:755px;top:377px;width:109px;height:40px;line-height:40px;text-align:center;white-space:nowrap;font-size:24px;color:#000"><span class="dg">4095</span></div>
<div style="position:absolute;left:179px;top:377px;width:5px;height:5px;background:#006400;clip-path:polygon(0 0,100% 0,0 100%)"></div>
<div class="s" style="position:absolute;left:35px;top:418px;width:43px;height:40px;line-height:40px;text-align:center;white-space:nowrap;font-size:24px;color:#000"><span class="dg">4</span></div>
<div class="s" style="position:absolute;left:78px;top:418px;width:102px;height:40px;line-height:40px;text-align:center;white-space:nowrap;font-size:24px;color:#000"><span class="cj">许攸</span></div>
<div class="s" style="position:absolute;left:178px;top:418px;width:249px;height:40px;line-height:40px;text-align:center;white-space:nowrap;font-size:24px;color:#000"><span class="dg">340123199905141211</span></div>
<div class="s" style="position:absolute;left:429px;top:418px;width:109px;height:40px;line-height:40px;text-align:center;white-space:nowrap;font-size:24px;color:#000"><span class="cj">男</span></div>
<div class="s" style="position:absolute;left:538px;top:418px;width:109px;height:40px;line-height:40px;text-align:center;white-space:nowrap;font-size:24px;color:#000"><span class="cj">已婚</span></div>
<div class="s" style="position:absolute;left:647px;top:418px;width:109px;height:40px;line-height:40px;text-align:center;white-space:nowrap;font-size:24px;color:#000"><span class="cj">大专</span></div>
<div class="s" style="position:absolute;left:755px;top:418px;width:109px;height:40px;line-height:40px;text-align:center;white-space:nowrap;font-size:24px;color:#000"><span class="dg">2874</span></div>
<div style="position:absolute;left:179px;top:418px;width:5px;height:5px;background:#006400;clip-path:polygon(0 0,100% 0,0 100%)"></div>
<div class="s" style="position:absolute;left:35px;top:459px;width:43px;height:40px;line-height:40px;text-align:center;white-space:nowrap;font-size:24px;color:#000"><span class="dg">5</span></div>
<div class="s" style="position:absolute;left:78px;top:459px;width:102px;height:40px;line-height:40px;text-align:center;white-space:nowrap;font-size:24px;color:#000"><span class="cj">司马懿</span></div>
<div class="s" style="position:absolute;left:178px;top:459px;width:249px;height:40px;line-height:40px;text-align:center;white-space:nowrap;font-size:24px;color:#000"><span class="dg">411329198912068921</span></div>
<div class="s" style="position:absolute;left:429px;top:459px;width:109px;height:40px;line-height:40px;text-align:center;white-space:nowrap;font-size:24px;color:#000"><span class="cj">男</span></div>
<div class="s" style="position:absolute;left:538px;top:459px;width:109px;height:40px;line-height:40px;text-align:center;white-space:nowrap;font-size:24px;color:#000"><span class="cj">已婚</span></div>
<div class="s" style="position:absolute;left:647px;top:459px;width:109px;height:40px;line-height:40px;text-align:center;white-space:nowrap;font-size:24px;color:#000"><span class="cj">初中</span></div>
<div class="s" style="position:absolute;left:755px;top:459px;width:109px;height:40px;line-height:40px;text-align:center;white-space:nowrap;font-size:24px;color:#000"><span class="dg">168</span></div>
<div style="position:absolute;left:179px;top:459px;width:5px;height:5px;background:#006400;clip-path:polygon(0 0,100% 0,0 100%)"></div>
<div class="s" style="position:absolute;left:35px;top:500px;width:43px;height:40px;line-height:40px;text-align:center;white-space:nowrap;font-size:24px;color:#000"><span class="dg">6</span></div>
<div class="s" style="position:absolute;left:78px;top:500px;width:102px;height:40px;line-height:40px;text-align:center;white-space:nowrap;font-size:24px;color:#000"><span class="cj">甘夫人</span></div>
<div class="s" style="position:absolute;left:178px;top:500px;width:249px;height:40px;line-height:40px;text-align:center;white-space:nowrap;font-size:24px;color:#000"><span class="dg">230621199801161546</span></div>
<div class="s" style="position:absolute;left:429px;top:500px;width:109px;height:40px;line-height:40px;text-align:center;white-space:nowrap;font-size:24px;color:#000"><span class="cj">女</span></div>
<div class="s" style="position:absolute;left:538px;top:500px;width:109px;height:40px;line-height:40px;text-align:center;white-space:nowrap;font-size:24px;color:#000"><span class="cj">已婚</span></div>
<div class="s" style="position:absolute;left:647px;top:500px;width:109px;height:40px;line-height:40px;text-align:center;white-space:nowrap;font-size:24px;color:#000"><span class="cj">大本</span></div>
<div class="s" style="position:absolute;left:755px;top:500px;width:109px;height:40px;line-height:40px;text-align:center;white-space:nowrap;font-size:24px;color:#000"><span class="dg">4478</span></div>
<div style="position:absolute;left:179px;top:500px;width:5px;height:5px;background:#006400;clip-path:polygon(0 0,100% 0,0 100%)"></div>
<div class="s" style="position:absolute;left:35px;top:541px;width:43px;height:40px;line-height:40px;text-align:center;white-space:nowrap;font-size:24px;color:#000"><span class="dg">7</span></div>
<div class="s" style="position:absolute;left:78px;top:541px;width:102px;height:40px;line-height:40px;text-align:center;white-space:nowrap;font-size:24px;color:#000"><span class="cj">孙尚香</span></div>
<div class="s" style="position:absolute;left:178px;top:541px;width:249px;height:40px;line-height:40px;text-align:center;white-space:nowrap;font-size:24px;color:#000"><span class="dg">542129198509235666</span></div>
<div class="s" style="position:absolute;left:429px;top:541px;width:109px;height:40px;line-height:40px;text-align:center;white-space:nowrap;font-size:24px;color:#000"><span class="cj">女</span></div>
<div class="s" style="position:absolute;left:538px;top:541px;width:109px;height:40px;line-height:40px;text-align:center;white-space:nowrap;font-size:24px;color:#000"><span class="cj">未婚</span></div>
<div class="s" style="position:absolute;left:647px;top:541px;width:109px;height:40px;line-height:40px;text-align:center;white-space:nowrap;font-size:24px;color:#000"><span class="cj">中专</span></div>
<div class="s" style="position:absolute;left:755px;top:541px;width:109px;height:40px;line-height:40px;text-align:center;white-space:nowrap;font-size:24px;color:#000"><span class="dg">3978</span></div>
<div style="position:absolute;left:179px;top:541px;width:5px;height:5px;background:#006400;clip-path:polygon(0 0,100% 0,0 100%)"></div>
<div class="s" style="position:absolute;left:35px;top:582px;width:43px;height:40px;line-height:40px;text-align:center;white-space:nowrap;font-size:24px;color:#000"><span class="dg">8</span></div>
<div class="s" style="position:absolute;left:78px;top:582px;width:102px;height:40px;line-height:40px;text-align:center;white-space:nowrap;font-size:24px;color:#000"><span class="cj">袁绍</span></div>
<div class="s" style="position:absolute;left:178px;top:582px;width:249px;height:40px;line-height:40px;text-align:center;white-space:nowrap;font-size:24px;color:#000"><span class="dg">140211198107293292</span></div>
<div class="s" style="position:absolute;left:429px;top:582px;width:109px;height:40px;line-height:40px;text-align:center;white-space:nowrap;font-size:24px;color:#000"><span class="cj">男</span></div>
<div class="s" style="position:absolute;left:538px;top:582px;width:109px;height:40px;line-height:40px;text-align:center;white-space:nowrap;font-size:24px;color:#000"><span class="cj">已婚</span></div>
<div class="s" style="position:absolute;left:647px;top:582px;width:109px;height:40px;line-height:40px;text-align:center;white-space:nowrap;font-size:24px;color:#000"><span class="cj">高中</span></div>
<div class="s" style="position:absolute;left:755px;top:582px;width:109px;height:40px;line-height:40px;text-align:center;white-space:nowrap;font-size:24px;color:#000"><span class="dg">2760</span></div>
<div style="position:absolute;left:179px;top:582px;width:5px;height:5px;background:#006400;clip-path:polygon(0 0,100% 0,0 100%)"></div>
<div class="s" style="position:absolute;left:35px;top:623px;width:43px;height:40px;line-height:40px;text-align:center;white-space:nowrap;font-size:24px;color:#000"><span class="dg">9</span></div>
<div class="s" style="position:absolute;left:78px;top:623px;width:102px;height:40px;line-height:40px;text-align:center;white-space:nowrap;font-size:24px;color:#000"><span class="cj">徐庶</span></div>
<div class="s" style="position:absolute;left:178px;top:623px;width:249px;height:40px;line-height:40px;text-align:center;white-space:nowrap;font-size:24px;color:#000"><span class="dg">500112196809204784</span></div>
<div class="s" style="position:absolute;left:429px;top:623px;width:109px;height:40px;line-height:40px;text-align:center;white-space:nowrap;font-size:24px;color:#000"><span class="cj">男</span></div>
<div class="s" style="position:absolute;left:538px;top:623px;width:109px;height:40px;line-height:40px;text-align:center;white-space:nowrap;font-size:24px;color:#000"><span class="cj">已婚</span></div>
<div class="s" style="position:absolute;left:647px;top:623px;width:109px;height:40px;line-height:40px;text-align:center;white-space:nowrap;font-size:24px;color:#000"><span class="cj">大专</span></div>
<div class="s" style="position:absolute;left:755px;top:623px;width:109px;height:40px;line-height:40px;text-align:center;white-space:nowrap;font-size:24px;color:#000"><span class="dg">3762</span></div>
<div style="position:absolute;left:179px;top:623px;width:5px;height:5px;background:#006400;clip-path:polygon(0 0,100% 0,0 100%)"></div>
<div class="s" style="position:absolute;left:35px;top:664px;width:43px;height:40px;line-height:40px;text-align:center;white-space:nowrap;font-size:24px;color:#000"><span class="dg">10</span></div>
<div class="s" style="position:absolute;left:78px;top:664px;width:102px;height:40px;line-height:40px;text-align:center;white-space:nowrap;font-size:24px;color:#000"><span class="cj">赵云</span></div>
<div class="s" style="position:absolute;left:178px;top:664px;width:249px;height:40px;line-height:40px;text-align:center;white-space:nowrap;font-size:24px;color:#000"><span class="dg">340123199905141212</span></div>
<div class="s" style="position:absolute;left:429px;top:664px;width:109px;height:40px;line-height:40px;text-align:center;white-space:nowrap;font-size:24px;color:#000"><span class="cj">男</span></div>
<div class="s" style="position:absolute;left:538px;top:664px;width:109px;height:40px;line-height:40px;text-align:center;white-space:nowrap;font-size:24px;color:#000"><span class="cj">未婚</span></div>
<div class="s" style="position:absolute;left:647px;top:664px;width:109px;height:40px;line-height:40px;text-align:center;white-space:nowrap;font-size:24px;color:#000"><span class="cj">大专</span></div>
<div class="s" style="position:absolute;left:755px;top:664px;width:109px;height:40px;line-height:40px;text-align:center;white-space:nowrap;font-size:24px;color:#000"><span class="dg">4425</span></div>
<div style="position:absolute;left:179px;top:664px;width:5px;height:5px;background:#006400;clip-path:polygon(0 0,100% 0,0 100%)"></div>
<div class="s" style="position:absolute;left:865px;top:791px;width:108px;height:30px;line-height:30px;text-align:center;white-space:nowrap;font-size:24px;color:#f00"><span class="dg">50000</span></div>
<div class="s" style="position:absolute;left:865px;top:822px;width:108px;height:30px;line-height:30px;text-align:center;white-space:nowrap;font-size:24px;color:#f00"><span class="dg">50000</span></div>
<div class="s" style="position:absolute;left:865px;top:853px;width:108px;height:30px;line-height:30px;text-align:center;white-space:nowrap;font-size:24px;color:#f00"><span class="dg">50000</span></div>
<div class="s" style="position:absolute;left:865px;top:884px;width:108px;height:30px;line-height:30px;text-align:center;white-space:nowrap;font-size:24px;color:#f00"><span class="dg">50000</span></div>
<div style="position:absolute;left:57px;top:275px;width:19px;height:19px;background:#fff;border-left:1px solid #e6e8ec"></div>
<svg style="left:62.6px;top:283px" width="8" height="5"><path d="M0 0 H8 L4 5 Z" fill="#1fb16c"/></svg>
<div style="position:absolute;left:159px;top:275px;width:19px;height:19px;background:#fff;border-left:1px solid #e6e8ec"></div>
<svg style="left:164.6px;top:283px" width="8" height="5"><path d="M0 0 H8 L4 5 Z" fill="#1fb16c"/></svg>
<div style="position:absolute;left:408px;top:275px;width:19px;height:19px;background:#fff;border-left:1px solid #e6e8ec"></div>
<svg style="left:413.6px;top:283px" width="8" height="5"><path d="M0 0 H8 L4 5 Z" fill="#1fb16c"/></svg>
<div style="position:absolute;left:517px;top:275px;width:19px;height:19px;background:#fff;border-left:1px solid #e6e8ec"></div>
<svg style="left:522.6px;top:283px" width="8" height="5"><path d="M0 0 H8 L4 5 Z" fill="#1fb16c"/></svg>
<div style="position:absolute;left:626px;top:275px;width:19px;height:19px;background:#fff;border-left:1px solid #e6e8ec"></div>
<svg style="left:631.6px;top:283px" width="8" height="5"><path d="M0 0 H8 L4 5 Z" fill="#1fb16c"/></svg>
<div style="position:absolute;left:735px;top:275px;width:19px;height:19px;background:#fff;border-left:1px solid #e6e8ec"></div>
<svg style="left:740.6px;top:283px" width="8" height="5"><path d="M0 0 H8 L4 5 Z" fill="#1fb16c"/></svg>
<div style="position:absolute;left:844px;top:275px;width:19px;height:19px;background:#fff;border-left:1px solid #e6e8ec"></div>
<svg style="left:849.6px;top:283px" width="8" height="5"><path d="M0 0 H8 L4 5 Z" fill="#1fb16c"/></svg>
<div style="position:absolute;left:953px;top:275px;width:19px;height:19px;background:#fff;border-left:1px solid #e6e8ec"></div>
<svg style="left:958.6px;top:283px" width="8" height="5"><path d="M0 0 H8 L4 5 Z" fill="#1fb16c"/></svg>
<div style="position:absolute;left:753px;top:293px;width:112px;height:44px;border:3px solid #1fb16c"></div>
<div style="position:absolute;left:860.5px;top:332.5px;width:5px;height:5px;background:#1fb16c;box-shadow:-1px -1px 0 #fff"></div>
<svg style="left:0px;top:0px" width="975" height="400"><path d="M815.4 308 H823 V311.6 H826.6 V319.4 H823 V323.7 H815.4 V319.4 H811 V311.6 H815.4 Z" fill="#000" stroke="#000" stroke-width="0.6" stroke-linejoin="round"/><path d="M817.1 310 H819.9 V314.1 H823.9 V316.8 H819.9 V321 H817.1 V316.8 H812.9 V314.1 H817.1 Z" fill="#fff"/></svg>
</body></html>
